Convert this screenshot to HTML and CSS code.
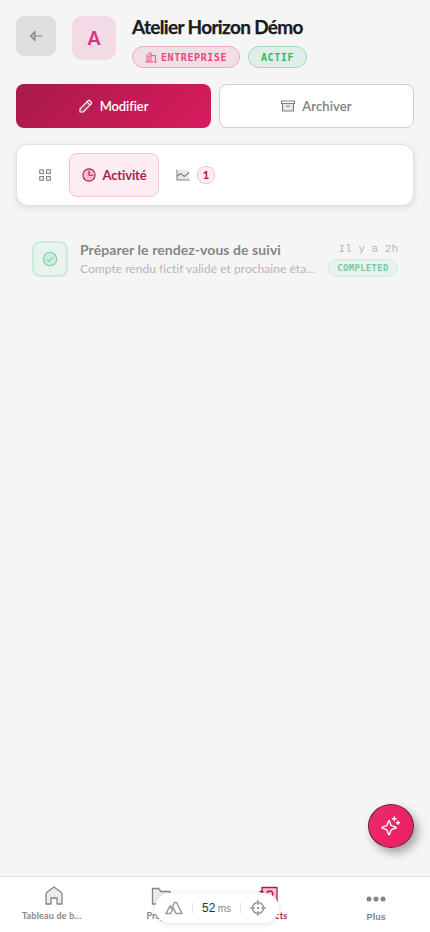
FILE: index.html
```html
<!DOCTYPE html>
<html lang="fr">
<head>
<meta charset="utf-8">
<meta name="viewport" content="width=device-width, initial-scale=1">
<title>Atelier Horizon Démo</title>
<link rel="stylesheet" href="styles.css">
</head>
<body>
<main class="page">
  <header class="header">
    <button class="back" aria-label="Retour"><svg width="14" height="14" viewBox="0 0 14 14"><path d="M6 2.500v9L1.500 7z" fill="#bbb"/><path d="M6 7h7"/></svg></button>
    <div class="avatar">A</div>
    <div class="identity">
      <h1>Atelier Horizon Démo</h1>
      <div class="badges">
        <span class="badge company"><svg width="12" height="12" viewBox="0 0 12 12"><path d="M2 11V4l4-2.500V11M6 4.500h4.500V11M.8 11h10.700M3.500 5.500h1M3.500 7.500h1M3.500 9.500h1" fill="#e6487c22"/></svg><span>ENTREPRISE</span></span>
        <span class="badge active-state"><span>ACTIF</span></span>
      </div>
    </div>
  </header>
  <div class="actions">
    <button class="btn primary"><svg width="14" height="14" viewBox="0 0 14 14"><path d="M1 13V9.800L9.300 1.500q.7-.7 1.400 0l1.800 1.800q.7.700 0 1.400L4.200 13zM8 2.800 11.200 6" fill="#ffffff22"/></svg><span>Modifier</span></button>
    <button class="btn secondary"><svg width="14" height="14" viewBox="0 0 14 14"><path d="M1.500 4.500h11v7.500h-11z" fill="#e8e8e8"/><path d="M.5 2h13v2.500H.5zM5.500 7h3"/></svg><span>Archiver</span></button>
  </div>
  <nav class="tabs">
    <button class="tab grid-tab" aria-label="Aperçu"><svg width="12" height="12" viewBox="0 0 12 12"><path d="M.7.700h3.800v3.800H.7zM7.500.700h3.800v3.800H7.500zM.7 7.500h3.800v3.800H.7zM7.500 7.500h3.800v3.800H7.500z"/></svg></button>
    <button class="tab selected"><svg width="14" height="14" viewBox="0 0 14 14"><circle cx="7" cy="7" r="6.100" fill="#f2bdd0"/><path d="M7 3v4.200h3.800"/></svg><span>Activité</span></button>
    <button class="tab chart-tab" aria-label="Opportunités"><svg width="14" height="14" viewBox="0 0 14 14"><path d="M1 2h12v10H1z" fill="#e8e8e8" stroke="none"/><path d="M1 2v10h12.500M1 8.500 4.500 5.500l4 3L13 4.500"/></svg><span class="count">1</span></button>
  </nav>
  <article class="event">
    <div class="event-icon"><svg width="16" height="16" viewBox="0 0 16 16"><circle cx="8" cy="8" r="6.700" fill="#cdeedd"/><path d="m5 8.300 2 2 4-4"/></svg></div>
    <div class="event-copy">
      <h2>Préparer le rendez-vous de suivi</h2>
      <p>Compte rendu fictif validé et prochaine éta...</p>
    </div>
    <div class="event-meta"><time>Il y a 2h</time><span class="status">COMPLETED</span></div>
  </article>
</main>

<button class="fab" aria-label="Assistant"><svg width="22" height="22" viewBox="0 0 22 22"><path d="M9 5.500c1 0 1.200 4 2.200 5s5 1.200 5 2.200-4 1.200-5 2.200-1.200 5-2.200 5-1.200-4-2.200-5-5-1.200-5-2.200 4-1.200 5-2.200 1.200-5 2.200-5z"/><path d="M14.300 2v3.600M12.500 3.800h3.600M18 6.200v3M16.500 7.700h3"/></svg></button>

<nav class="bottom-nav">
  <a class="nav-item home"><svg width="20" height="20" viewBox="0 0 20 20"><path d="M2 18V8.500Q2 7 3.200 6L10 1l6.800 5Q18 7 18 8.500V18h-5v-6H7v6z" fill="#ececec"/></svg><span>Tableau de b...</span></a>
  <a class="nav-item"><svg width="20" height="20" viewBox="0 0 20 20"><path d="M1.500 18V2.500h6l2.500 3h9V18z" fill="#ececec"/></svg><span>Projets</span></a>
  <a class="nav-item current"><svg width="20" height="20" viewBox="0 0 20 20"><path d="M3 1.500h15v16H3zM1 5.500h3M1 14h3" fill="#f9c9d9"/><circle cx="10.800" cy="8" r="3"/><path d="M12.500 10.500 16 14"/></svg><span>Contacts</span></a>
  <a class="nav-item more"><svg width="20" height="20" viewBox="0 0 20 20"><g fill="#858585" stroke="none"><circle cx="3" cy="10" r="2.500"/><circle cx="10" cy="10" r="2.500"/><circle cx="17" cy="10" r="2.500"/></g></svg><span>Plus</span></a>
</nav>

<aside class="monitor">
  <svg width="18" height="14" viewBox="0 0 18 14"><path d="M1 12.500 5 5l2.500 4-2 3.500zM7.500 5.500 9.500 1.500h2l5.500 11h-6L7.500 5.500"/></svg>
  <i></i><span class="latency">52 <small>ms</small></span><i></i>
  <svg width="16" height="16" viewBox="0 0 16 16"><circle cx="8" cy="8" r="5.500"/><path d="M8 .7v3.500M8 11.800v3.500M.7 8h3.500M11.800 8h3.500"/><circle cx="8" cy="8" r=".5" fill="#999"/></svg>
</aside>
</body>
</html>
```
FILE: styles.css
```css
* { box-sizing: border-box; }
body { margin: 0; height: 932px; overflow: hidden; background: #f5f5f5; font-family: Lato, sans-serif; color: #1b1b1e; }
button { font: inherit; border: 0; padding: 0; display: flex; align-items: center; justify-content: center; }
h1, h2, p { margin: 0; white-space: nowrap; }
svg { display: block; flex: none; fill: none; stroke: currentColor; stroke-width: 1.1; stroke-linejoin: round; stroke-linecap: round; }
.page { padding: 16px; }
.header { display: flex; height: 52px; gap: 16px; }
.back { width: 40px; height: 40px; border-radius: 8px; background: #dfdfdf; color: #858585; }
.avatar { width: 44px; height: 44px; padding-bottom: 1px; border-radius: 10px; background: linear-gradient(135deg, #f1dbe6, #f4dbe6); color: #d73682; font-size: 18px; font-weight: 900; display: grid; place-items: center; }
.identity { display: flex; flex-direction: column; }
h1 { font-size: 19px; line-height: 22px; font-weight: 700; height: 30px; letter-spacing: -.66px; -webkit-text-stroke: .25px; }
.badges { display: flex; gap: 8px; }
.badge { height: 22px; border: 1px solid; border-radius: 11px; display: flex; align-items: center; font: 700 10px "DejaVu Sans Mono", monospace; letter-spacing: .6px; }
.company { width: 108px; padding-left: 12px; gap: 4px; color: #e6487c; background: #f4dee6; border-color: #eeacc3; }
.company svg { stroke-width: .8; }
.active-state { width: 59px; padding-left: 12px; color: #28bd6b; background: #e0eee7; border-color: #a3dabd; }
.actions { display: grid; grid-template-columns: 1fr 1fr; gap: 8px; margin-top: 16px; }
.btn { height: 44px; border-radius: 8px; gap: 7px; font-size: 13px; font-weight: 600; }
.primary { color: #fff; background: linear-gradient(135deg, #a81a4b, #d81b5e); letter-spacing: -.1px; }
.secondary { color: #808080; background: #fff; border: 1px solid #d0d0d0; letter-spacing: .12px; }
.tabs { margin-top: 16px; height: 62px; display: flex; align-items: center; padding: 0 8px; background: #fff; border: 1px solid #e0e0e0; border-radius: 12px; box-shadow: 0 2px 7px #0000001c; }
.tab { height: 44px; background: none; color: #858585; }
.grid-tab { width: 40px; margin-right: 4px; }
.grid-tab path { fill: #eee; }
.selected { width: 90px; gap: 7px; background: #fdecf1; border: 1px solid #f3c4d4; border-radius: 8px; color: #ad1c4f; font-size: 13px; font-weight: 700; letter-spacing: -.15px; }
.chart-tab { margin-left: 17px; gap: 7px; }
.count { width: 18px; height: 18px; border: 1px solid #f3c4d4; border-radius: 8px; background: #fdecf1; color: #ad1c4f; font: 900 11px/16px Lato, sans-serif; }
.event { margin: 26px 16px 0; height: 54px; display: flex; align-items: center; gap: 12px; }
.event-icon { width: 36px; height: 36px; border: 2px solid #c9ebdb; border-radius: 8px; background: #e8f3ee; color: #83d1aa; display: grid; place-items: center; }
.event-copy { width: 236px; padding-top: 1px; }
h2 { font-size: 14px; line-height: 18px; color: #858587; font-weight: 700; letter-spacing: .07px; }
.event-copy p { font-size: 12px; line-height: 19px; color: #b5b5b5; letter-spacing: .04px; }
.event-meta { flex: 1; display: flex; flex-direction: column; align-items: flex-end; gap: 3px; white-space: nowrap; }
.event-meta time { font: 11px/14px "Liberation Mono", monospace; color: #b5b5b5; }
.status { width: 70px; height: 18px; border: 1px solid #d2ebdf; border-radius: 9px; background: #e7f2ed; color: #7cc8a2; font: 700 9px/16px "DejaVu Sans Mono", monospace; text-align: center; margin-left: -12px; letter-spacing: .3px; }
.fab { position: fixed; right: 16px; top: 804px; width: 46px; height: 44px; border: 1px solid #652038; border-radius: 50%; color: #fff; background: linear-gradient(135deg, #ed2b6b, #e91e63); box-shadow: 4px 5px 10px #00000055; }
.fab svg { stroke-width: 1.4; }
.bottom-nav { position: fixed; inset: 876px 0 0; display: grid; grid-template-columns: repeat(4, 1fr); background: #fff; border-top: 1px solid #dedede; }
.nav-item { display: flex; flex-direction: column; align-items: center; padding-top: 9px; gap: 4px; font-size: 9px; line-height: 12px; font-weight: 700; color: #858585; letter-spacing: .2px; }
.nav-item svg { stroke-width: 1.3; }
.home span { margin-left: -4px; }
.current { color: #ad1c4f; }
.more { padding-top: 12px; gap: 2px; font-family: "Liberation Sans", sans-serif; letter-spacing: .1px; }
.monitor { position: fixed; left: 155px; top: 893px; width: 124px; height: 30px; padding-right: 13px; padding-left: 10px; border-radius: 15px; background: #fff; box-shadow: 0 1px 6px #00000020; display: flex; align-items: center; justify-content: space-between; color: #999; }
.monitor svg { stroke-width: 1.5; }
.monitor i { width: 1px; height: 10px; background: #e5e5e5; }
.latency { font: 12px "Liberation Sans", sans-serif; color: #333; white-space: nowrap; }
.latency small { font-size: 10px; color: #888; margin-left: -1px; }
```
